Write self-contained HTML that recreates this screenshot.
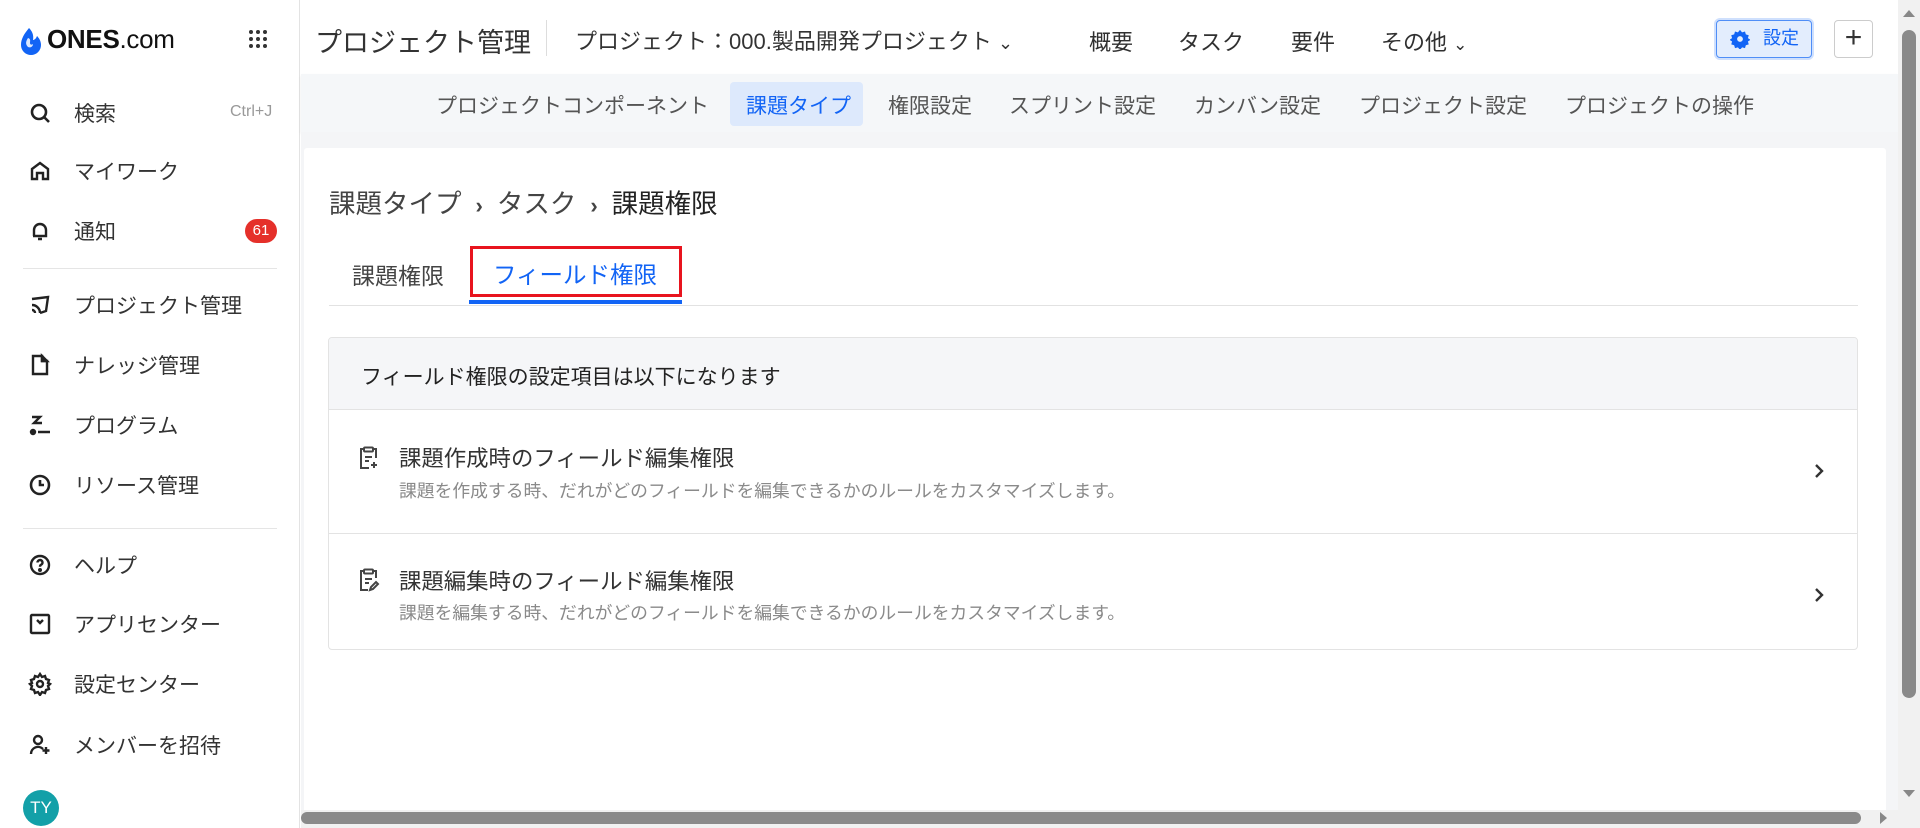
<!DOCTYPE html>
<html><head><meta charset="utf-8"><style>
*{box-sizing:border-box;margin:0;padding:0}
body{width:1920px;height:828px;overflow:hidden;background:#fff;font-family:"Liberation Sans","Noto Sans CJK JP",sans-serif;color:#303030;position:relative}
.a{position:absolute;white-space:nowrap}
.side{position:absolute;left:0;top:0;width:300px;height:828px;border-right:1px solid #e3e3e3;background:#fff}
.it{position:absolute;left:28px;font-size:21px;color:#333;display:flex;align-items:center;height:30px}
.it svg{width:24px;height:24px;margin-right:22px}
.hr{position:absolute;left:23px;width:254px;height:1px;background:#e5e5e5}
.sub{font-size:21px;color:#555;top:90px}
.row-t{font-size:22.4px;color:#333}
.row-d{font-size:17.8px;color:#8a8a8a}
</style></head><body>
<div class="side">
 <svg class="a" style="left:20px;top:26px" width="24" height="30" viewBox="0 0 24 30"><path d="M9 2C4 8 1 13 1 19a10 10 0 0 0 20 0c0-4-2-7-4-9-1 3-3 4-4 4 1-5-1-9-4-12z" fill="#1264f5"/><path d="M8 12c-2 3-3 6 0 9 2 1 5 0 5-3-1 1-3 1-3-1 0-2 1-4-2-5z" fill="#fff" opacity=".85"/></svg>
 <div class="a" style="left:47px;top:24px;font-size:26px;font-weight:bold;color:#111;letter-spacing:-.3px">ONES<span style="font-weight:normal">.com</span></div>
 <svg class="a" style="left:248px;top:29px" width="20" height="20" viewBox="0 0 20 20" fill="#333"><circle cx="3" cy="3" r="2"/><circle cx="10" cy="3" r="2"/><circle cx="17" cy="3" r="2"/><circle cx="3" cy="10" r="2"/><circle cx="10" cy="10" r="2"/><circle cx="17" cy="10" r="2"/><circle cx="3" cy="17" r="2"/><circle cx="10" cy="17" r="2"/><circle cx="17" cy="17" r="2"/></svg>
 <div class="it" style="top:98px"><svg viewBox="0 0 24 24" fill="none" stroke="#222" stroke-width="2.6"><circle cx="11" cy="11" r="7"/><path d="M16 16l5 5"/></svg>検索</div>
 <div class="a" style="left:230px;top:103px;font-size:16px;color:#999">Ctrl+J</div>
 <div class="it" style="top:156px"><svg viewBox="0 0 24 24" fill="none" stroke="#222" stroke-width="2.4"><path d="M4 10l8-6 8 6v10h-5v-6h-6v6H4z"/></svg>マイワーク</div>
 <div class="it" style="top:216px"><svg viewBox="0 0 24 24" fill="none" stroke="#222" stroke-width="2.4"><path d="M6 17V11a6 6 0 0 1 12 0v6H5h14M10 20h4"/></svg>通知</div>
 <div class="a" style="left:245px;top:219px;width:32px;height:24px;border-radius:12px;background:#e5302a;color:#fff;font-size:15px;text-align:center;line-height:24px">61</div>
 <div class="hr" style="top:268px"></div>
 <div class="it" style="top:290px"><svg viewBox="0 0 24 24" fill="none" stroke="#222" stroke-width="2.4"><path d="M4 6l16-2-2 14-6 2M4 12a8 8 0 0 1 8 8M4 17a3 3 0 0 1 3 3"/></svg>プロジェクト管理</div>
 <div class="it" style="top:350px"><svg viewBox="0 0 24 24" fill="none" stroke="#222" stroke-width="2.4"><path d="M5 3h9v5h5v13H5z"/><path d="M14 3l5 5h-5z" fill="#222"/></svg>ナレッジ管理</div>
 <div class="it" style="top:410px"><svg viewBox="0 0 24 24" fill="none" stroke="#222" stroke-width="2.4"><path d="M4 4h8l-6 6h8M10 19h12"/><circle cx="5" cy="19" r="2" fill="#222"/></svg>プログラム</div>
 <div class="it" style="top:470px"><svg viewBox="0 0 24 24" fill="none" stroke="#222" stroke-width="2.6"><circle cx="12" cy="12" r="9"/><path d="M12 7v5h4"/></svg>リソース管理</div>
 <div class="hr" style="top:528px"></div>
 <div class="it" style="top:550px"><svg viewBox="0 0 24 24" fill="none" stroke="#222" stroke-width="2.4"><circle cx="12" cy="12" r="9"/><path d="M9.5 9.5a2.5 2.5 0 1 1 3.5 2.3c-.8.4-1 1-1 2"/><circle cx="12" cy="17" r=".8" fill="#222"/></svg>ヘルプ</div>
 <div class="it" style="top:609px"><svg viewBox="0 0 24 24" fill="none" stroke="#222" stroke-width="2.4"><rect x="3" y="3" width="18" height="18" rx="1"/><path d="M9 8l3 3 3-3"/></svg>アプリセンター</div>
 <div class="it" style="top:669px"><svg viewBox="0 0 24 24" fill="none" stroke="#222" stroke-width="2.4"><path d="M12 2l2 3 3-1 1 3 3 1-1 3 2 1-2 2 1 3-3 1-1 3-3-1-2 3-2-3-3 1-1-3-3-1 1-3-2-2 2-1-1-3 3-1 1-3 3 1z"/><circle cx="12" cy="12" r="3"/></svg>設定センター</div>
 <div class="it" style="top:730px"><svg viewBox="0 0 24 24" fill="none" stroke="#222" stroke-width="2.4"><circle cx="10" cy="7" r="4"/><path d="M3 21a7 7 0 0 1 12-5M18 14v7M14.5 17.5h7"/></svg>メンバーを招待</div>
 <div class="a" style="left:23px;top:790px;width:36px;height:36px;border-radius:50%;background:#13a0a8;color:#fff;font-size:17px;text-align:center;line-height:36px">TY</div>
</div>

<div class="a" style="left:301px;top:0;width:1597px;height:74px;background:#fff"></div>
<div class="a" style="left:315px;top:21px;font-size:27px;color:#333">プロジェクト管理</div>
<div class="a" style="left:546px;top:20px;width:1px;height:36px;background:#ddd"></div>
<div class="a" style="left:575px;top:24px;font-size:22px;color:#333">プロジェクト：000.製品開発プロジェクト <span style="font-size:18px">⌄</span></div>
<div class="a" style="left:1089px;top:25px;font-size:22px">概要</div>
<div class="a" style="left:1178px;top:25px;font-size:22px">タスク</div>
<div class="a" style="left:1291px;top:25px;font-size:22px">要件</div>
<div class="a" style="left:1381px;top:25px;font-size:22px">その他 <span style="font-size:17px">⌄</span></div>
<div class="a" style="left:1716px;top:20px;width:96px;height:38px;border:1.5px solid #4f8ef7;border-radius:4px;background:#e3edfd;box-shadow:0 0 0 2px #cfe0fd;color:#1264f5;font-size:18px;line-height:35px;padding-left:46px">設定</div>
<svg class="a" style="left:1730px;top:29px" width="20" height="20" viewBox="0 0 24 24"><path d="M12 1l2.5 3 3.5-1 1 3.5 3.5 1-1 3.5 3 2-3 2 1 3.5-3.5 1-1 3.5-3.5-1-2.5 3-2.5-3-3.5 1-1-3.5-3.5-1 1-3.5-3-2 3-2-1-3.5 3.5-1 1-3.5 3.5 1z" fill="#1264f5"/><circle cx="12" cy="12" r="3.5" fill="#e3edfd"/></svg>
<div class="a" style="left:1834px;top:20px;width:39px;height:38px;border:1px solid #ccc;border-radius:4px;font-size:30px;text-align:center;line-height:34px;color:#333">+</div>

<div class="a" style="left:301px;top:74px;width:1597px;height:58px;background:#f5f7f9;box-shadow:0 2px 3px rgba(0,0,0,.08)"></div>
<div class="a" style="left:730px;top:82px;width:133px;height:44px;background:#dde9fc;border-radius:4px"></div>
<div class="a sub" style="left:436px">プロジェクトコンポーネント</div>
<div class="a sub" style="left:746px;color:#1264f5">課題タイプ</div>
<div class="a sub" style="left:888px">権限設定</div>
<div class="a sub" style="left:1009px">スプリント設定</div>
<div class="a sub" style="left:1194px">カンバン設定</div>
<div class="a sub" style="left:1359px">プロジェクト設定</div>
<div class="a sub" style="left:1565px">プロジェクトの操作</div>

<div class="a" style="left:301px;top:132px;width:1597px;height:680px;background:#f4f5f7"></div>
<div class="a" style="left:304px;top:148px;width:1582px;height:670px;background:#fff;border-radius:3px"></div>
<div class="a" style="left:329px;top:182px;font-size:26.5px;color:#444">課題タイプ<span style="font-size:22px;font-weight:bold;margin:0 14px">›</span>タスク<span style="font-size:22px;font-weight:bold;margin:0 14px">›</span><span style="color:#222">課題権限</span></div>
<div class="a" style="left:352px;top:257px;font-size:23px;color:#444">課題権限</div>
<div class="a" style="left:493px;top:256px;font-size:23.5px;color:#1264f5">フィールド権限</div>
<div class="a" style="left:470px;top:246px;width:212px;height:51px;border:3px solid #e8141e"></div>
<div class="a" style="left:469px;top:300px;width:213px;height:4px;background:#1264f5"></div>
<div class="a" style="left:329px;top:305px;width:1529px;height:1px;background:#e2e2e2"></div>

<div class="a" style="left:328px;top:337px;width:1530px;height:313px;border:1px solid #e3e3e3;border-radius:4px;overflow:hidden">
 <div style="height:72px;background:#f5f6f8;border-bottom:1px solid #e3e3e3"></div>
 <div style="position:absolute;top:195px;left:0;right:0;height:1px;background:#e3e3e3"></div>
</div>
<div class="a" style="left:361px;top:361px;font-size:21px;color:#222">フィールド権限の設定項目は以下になります</div>
<svg class="a" style="left:358px;top:446px" width="22" height="24" viewBox="0 0 22 24" fill="none" stroke="#444" stroke-width="2"><path d="M6 3H3v19h8M15 3h3v9"/><rect x="6" y="1.5" width="9" height="4" rx="1"/><path d="M7 11h7M7 15h4M16 16v6M13 19h6"/></svg>
<div class="a row-t" style="left:399px;top:441px">課題作成時のフィールド編集権限</div>
<div class="a row-d" style="left:399px;top:477px">課題を作成する時、だれがどのフィールドを編集できるかのルールをカスタマイズします。</div>
<svg class="a" style="left:1812px;top:462px" width="14" height="18" viewBox="0 0 14 18" fill="none" stroke="#333" stroke-width="2.4"><path d="M4 3l6 6-6 6"/></svg>
<svg class="a" style="left:358px;top:568px" width="22" height="24" viewBox="0 0 22 24" fill="none" stroke="#444" stroke-width="2"><path d="M6 3H3v19h7M15 3h3v7"/><rect x="6" y="1.5" width="9" height="4" rx="1"/><path d="M7 11h7M7 15h4M12 22l1-3 5-5 2 2-5 5z"/></svg>
<div class="a row-t" style="left:399px;top:564px">課題編集時のフィールド編集権限</div>
<div class="a row-d" style="left:399px;top:599px">課題を編集する時、だれがどのフィールドを編集できるかのルールをカスタマイズします。</div>
<svg class="a" style="left:1812px;top:586px" width="14" height="18" viewBox="0 0 14 18" fill="none" stroke="#333" stroke-width="2.4"><path d="M4 3l6 6-6 6"/></svg>

<div class="a" style="left:1898px;top:0;width:22px;height:828px;background:#f1f1f1"></div>
<div class="a" style="left:1903px;top:10px;width:0;height:0;border-left:6px solid transparent;border-right:6px solid transparent;border-bottom:7px solid #888"></div>
<div class="a" style="left:1902px;top:30px;width:14px;height:668px;background:#8a8a8a;border-radius:7px"></div>
<div class="a" style="left:1903px;top:790px;width:0;height:0;border-left:6px solid transparent;border-right:6px solid transparent;border-top:7px solid #888"></div>
<div class="a" style="left:301px;top:810px;width:1597px;height:18px;background:#f1f1f1"></div>
<div class="a" style="left:301px;top:812px;width:1560px;height:12px;background:#8a8a8a;border-radius:6px"></div>
<div class="a" style="left:1880px;top:812px;width:0;height:0;border-top:6px solid transparent;border-bottom:6px solid transparent;border-left:7px solid #888"></div>
</body></html>
